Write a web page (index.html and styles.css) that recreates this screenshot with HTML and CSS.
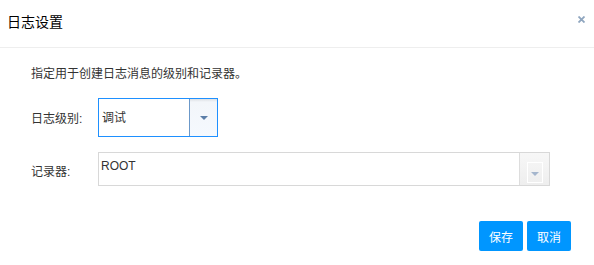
FILE: index.html
```html
<!DOCTYPE html>
<html lang="zh-CN">
<head>
<meta charset="utf-8">
<title>日志设置</title>
<link rel="stylesheet" href="styles.css">
</head>
<body>
<div class="dialog">
  <div class="header">
    <span class="title">日志设置</span>
    <span class="close" aria-label="close">
      <svg width="7" height="7" viewBox="0 0 7 7"><path d="M0.5 0.5 L6.5 6.5 M6.5 0.5 L0.5 6.5" stroke="#8fa6bf" stroke-width="1.8"/></svg>
    </span>
  </div>
  <div class="content">
    <p class="desc">指定用于创建日志消息的级别和记录器。</p>
    <div class="row row-level">
      <label class="label">日志级别:</label>
      <div class="select active">
        <span class="value">调试</span>
        <span class="trigger">
          <svg width="8" height="4" viewBox="0 0 8 4"><path d="M0 0 H8 L4 4 Z" fill="#5b7ea8"/></svg>
        </span>
      </div>
    </div>
    <div class="row row-logger">
      <label class="label">记录器:</label>
      <div class="combo">
        <span class="value">ROOT</span>
        <span class="trigger2">
          <span class="inner">
            <svg width="8" height="4" viewBox="0 0 8 4"><path d="M0 0 H8 L4 4 Z" fill="#a5b6cd"/></svg>
          </span>
        </span>
      </div>
    </div>
  </div>
  <div class="footer">
    <button class="btn">保存</button>
    <button class="btn">取消</button>
  </div>
</div>
</body>
</html>
```

FILE: styles.css
```css
html, body {
  margin: 0;
  padding: 0;
  background: #ffffff;
}
body {
  font-family: "Liberation Sans", "Noto Sans CJK SC", sans-serif;
  font-size: 12px;
  color: #333333;
}
.dialog {
  width: 594px;
  height: 265px;
  display: flex;
  flex-direction: column;
}
.header {
  height: 47px;
  border-bottom: 1px solid #eeeeee;
  display: flex;
  align-items: center;
  justify-content: space-between;
  padding: 0 8px 0 7px;
  box-sizing: content-box;
}
.title {
  font-size: 14px;
  color: #000000;
  margin-top: -6px;
}
.close {
  display: flex;
  margin-top: -8px;
  margin-right: 1px;
}
.content {
  padding: 17px 0 0 31px;
  display: flex;
  flex-direction: column;
}
.desc {
  margin: 0;
  line-height: 18px;
  color: #333333;
}
.row {
  display: flex;
  align-items: center;
}
.row-level {
  margin-top: 15px;
}
.row-logger {
  margin-top: 15px;
  align-items: flex-start;
}
.label {
  width: 67px;
  color: #333333;
}
.row-logger .label {
  margin-top: 10px;
}
.select {
  width: 120px;
  height: 39px;
  box-sizing: border-box;
  border: 1px solid #1e90ff;
  display: flex;
  align-items: stretch;
}
.select .value {
  flex: 1;
  display: flex;
  align-items: center;
  padding-left: 3px;
  font-size: 12px;
  color: #333;
  padding-bottom: 2px;
}
.select .trigger {
  width: 27px;
  border-left: 1px solid #6b98c9;
  background: linear-gradient(#dcdfe3 0, #f3f6fa 3px, #f5f9fe 100%);
  display: flex;
  align-items: center;
  justify-content: center;
  padding-top: 1px;
}
.combo {
  width: 452px;
  height: 34px;
  box-sizing: border-box;
  border: 1px solid #d8d8d8;
  display: flex;
  align-items: stretch;
}
.combo .value {
  flex: 1;
  padding: 6px 0 0 2px;
  font-size: 12px;
  color: #333;
}
.trigger2 {
  width: 29px;
  border-left: 1px solid #dddddd;
  background: linear-gradient(#f7f7f7, #eeeeee);
  display: flex;
  align-items: flex-end;
  justify-content: center;
  padding-bottom: 2px;
}
.trigger2 .inner {
  width: 16px;
  height: 21px;
  box-sizing: border-box;
  border: 1px solid #ffffff;
  display: flex;
  align-items: center;
  justify-content: center;
  padding-top: 3px;
}
.footer {
  display: flex;
  justify-content: flex-end;
  gap: 4px;
  padding-right: 23px;
  margin-top: 35px;
}
.btn {
  width: 44px;
  height: 30px;
  border: none;
  border-radius: 2px;
  background: #0096ff;
  color: #ffffff;
  font-family: "Liberation Sans", "Noto Sans CJK SC", sans-serif;
  font-size: 12px;
  padding: 0;
}
```
